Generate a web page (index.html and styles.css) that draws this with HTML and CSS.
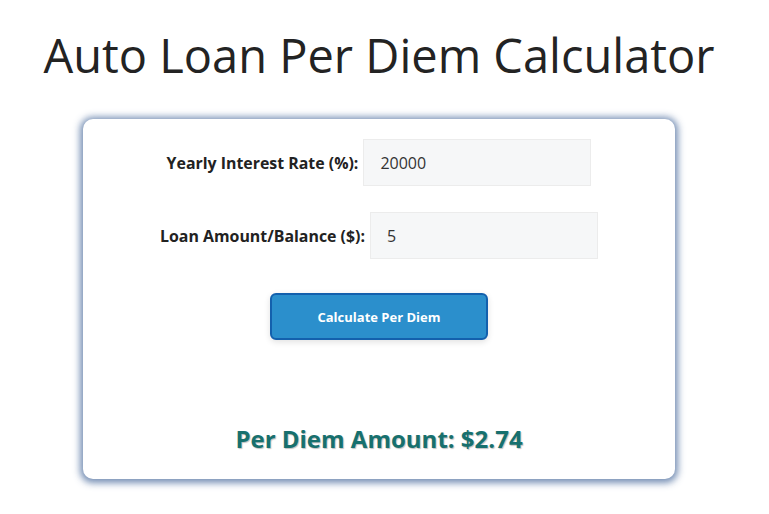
FILE: index.html
```html
<!DOCTYPE html>
<html lang="en">
<head>
<meta charset="utf-8">
<title>Auto Loan Per Diem Calculator</title>
<link rel="stylesheet" href="styles.css">
</head>
<body>
<h1 class="title">Auto Loan Per Diem Calculator</h1>
<div class="card">
  <div class="row">
    <label class="label" for="rate">Yearly Interest Rate (%):</label>
    <input class="field" id="rate" type="text" value="20000">
  </div>
  <div class="row">
    <label class="label" for="amount">Loan Amount/Balance ($):</label>
    <input class="field" id="amount" type="text" value="5">
  </div>
  <button class="btn" type="button">Calculate Per Diem</button>
  <div class="result">Per Diem Amount: $2.74</div>
</div>
</body>
</html>
```
FILE: styles.css
```css
html, body {
  margin: 0;
  padding: 0;
  background: #ffffff;
}
body {
  padding-right: 11px;
  padding-bottom: 30px;
  font-family: "Open Sans", "Noto Sans", "Liberation Sans", sans-serif;
  color: #222;
}
.title {
  margin: 0;
  padding-top: 21px;
  height: 95px;
  box-sizing: border-box;
  text-align: center;
  font-weight: 400;
  font-size: 47px;
  line-height: 68px;
  color: #232323;
}
.card {
  width: 592px;
  height: 360px;
  box-sizing: border-box;
  margin: 24px auto 0;
  padding: 20px 0 0;
  border-radius: 10px;
  background: #fff;
  box-shadow: 0 1px 7px 3px rgba(95, 125, 168, 0.85);
  display: flex;
  flex-direction: column;
  align-items: center;
}
.row {
  display: flex;
  align-items: center;
  gap: 5px;
  margin-bottom: 26px;
}
.label {
  font-weight: 700;
  font-size: 15.9px;
  color: #222;
}
.field {
  width: 228px;
  height: 47px;
  box-sizing: border-box;
  padding: 0 16px;
  border: 1px solid #ececec;
  background: #f6f7f8;
  font-family: inherit;
  font-size: 16px;
  color: #333;
  outline: none;
}
.btn {
  margin-top: 8px;
  width: 218px;
  height: 47px;
  border: 2px solid #1360ad;
  border-radius: 6px;
  background: #2b8fcc;
  color: #fff;
  font-family: inherit;
  font-weight: 700;
  font-size: 13px;
  box-shadow: 0 2px 6px rgba(0, 0, 0, 0.12);
}
.result {
  margin-top: 82px;
  font-weight: 700;
  font-size: 24px;
  color: #17706e;
  text-shadow: 1px 1px 1px rgba(0, 0, 0, 0.25);
}
```
